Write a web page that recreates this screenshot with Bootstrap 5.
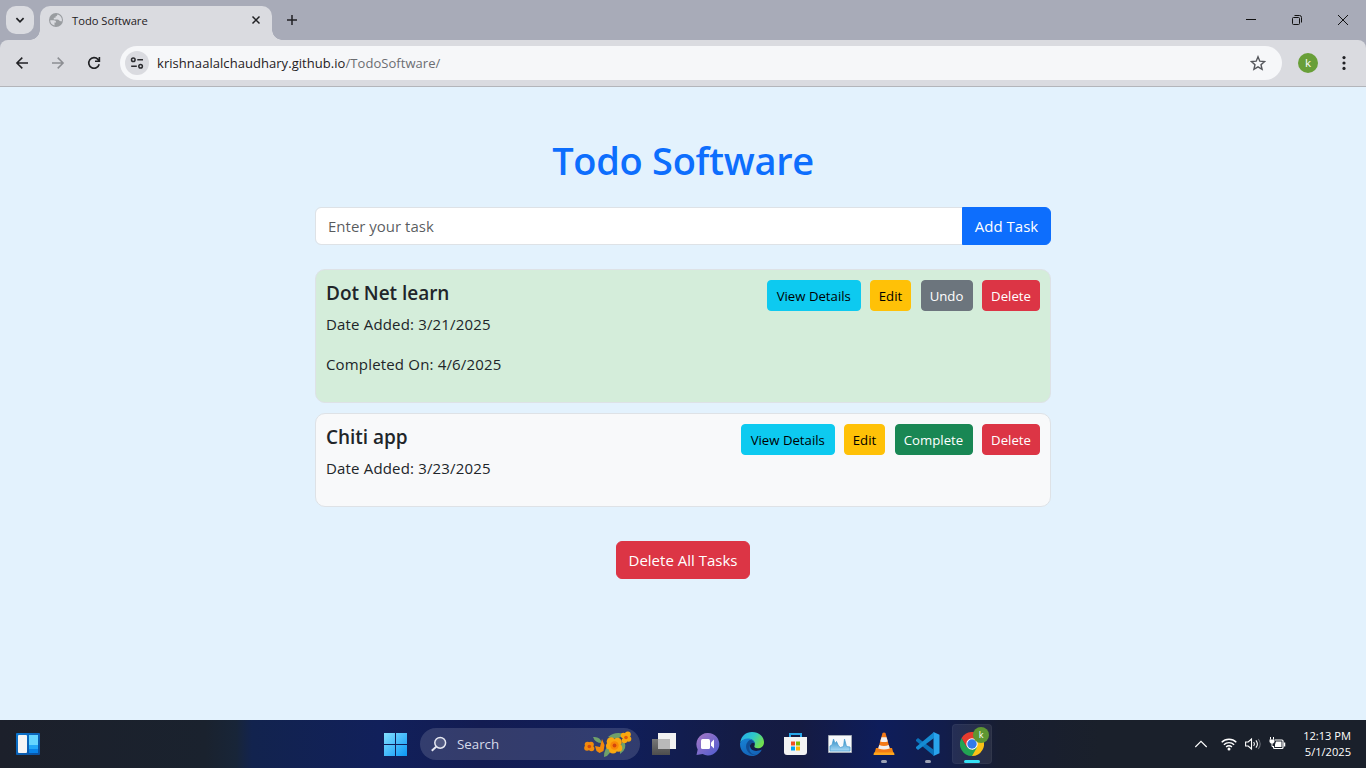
<!DOCTYPE html>
<html lang="en">
<head>
<meta charset="utf-8">
<meta name="viewport" content="width=device-width, initial-scale=1">
<title>Todo Software</title>
<link rel="stylesheet" href="https://cdn.jsdelivr.net/npm/bootstrap@5.3.0/dist/css/bootstrap.min.css">
<style>
  body { font-family: "Open Sans", "Noto Sans", sans-serif; font-size: 15px; line-height: 24px; background: #e3f2fd; overflow: hidden; }
  svg { display: block; flex: none; }
  /* browser window */
  .tab-strip { height: 40px; background: #a8abb8; padding-left: 6px; }
  .tab-menu { width: 28px; height: 28px; border-radius: 10px; background: #dadbe0; margin: 6px 6px 0 0; }
  .page-tab { width: 232px; height: 34px; margin-top: 6px; border-radius: 10px 10px 0 0; background: #dadbe0; font-size: 11.2px; line-height: 28px; padding: 0 8px 6px; color: #1f2023; }
  .page-tab::before, .page-tab::after { content: ""; position: absolute; bottom: 0; width: 10px; height: 10px; }
  .page-tab::before { left: -10px; background: radial-gradient(circle at 0 0, transparent 9.5px, #dadbe0 10px); }
  .page-tab::after { right: -10px; background: radial-gradient(circle at 100% 0, transparent 9.5px, #dadbe0 10px); }
  .tab-label { padding-top: 1px; }
  .win-btn { width: 46px; height: 40px; }
  .toolbar-wrap { background: #a8abb8; }
  .browser-bar { height: 47px; background: #dadbe0; border-radius: 8px 8px 0 0; border-bottom: 1px solid #b3b5ba; }
  .nav-ico { width: 36px; }
  .address { height: 34px; width: 1162px; margin-left: 8px; border-radius: 17px; background: #f6f7f9; padding: 0 16px 0 5px; font-size: 13px; letter-spacing: .05px; color: #1f2023; }
  .site-info { width: 24px; height: 24px; border-radius: 50%; background: #dadbe0; margin-right: 8px; }
  .url-path { color: #6b6d72; }
  .avatar-dot { width: 20px; height: 20px; border-radius: 50%; background: #689f38; color: #fff; font-size: 11.5px; line-height: 20px; margin: 0 16px; }
  /* todo page */
  .todo-page { height: 633px; }
  .todo-shell { width: 736px; padding-top: 50px; }
  .todo-title { font-size: 38px; line-height: 46px; font-weight: 550; margin-bottom: 24px; letter-spacing: -.3px; }
  .todo-shell .form-control, .todo-shell .btn { font-size: 15px; line-height: 24px; }
  .add-btn { width: 89px; padding-left: 0; padding-right: 0; white-space: nowrap; }
  .task-box { border: 1px solid #dee2e6; border-radius: 10px; padding: 10px; background: #f8f9fa; margin-bottom: 10px; }
  .task-box.done { background: #d4edda; }
  .task-box h5 { font-size: 19px; line-height: 22px; padding-top: 2px; font-weight: 600; margin-bottom: 8px; letter-spacing: -.03px; }
  .task-box p { letter-spacing: .17px; }
  .todo-shell .task-box .btn { font-size: 13.2px; line-height: 21px; height: 31px; padding: 5px 0 3px; white-space: nowrap; }
  .w-view { width: 93.5px; } .w-edit { width: 41px; } .w-undo { width: 52px; } .w-comp { width: 78px; } .w-del { width: 58px; }
  .task-actions { gap: 9.5px; }
  .clear-btn { width: 134px; margin-top: 24px; padding-left: 0; padding-right: 0; white-space: nowrap; }
  /* taskbar */
  .os-bar { height: 48px; padding-left: 16px; color: #fff; background: linear-gradient(90deg, #1c202b 0, #1a222e 205px, #182538 236px, #12234e 252px, #11205b 380px, #131c52 480px, #101e5a 620px, #141c45 740px, #151b42 800px, #0e1d5b 880px, #121d4b 945px, #181e31 1000px, #1a202b 1100px, #1a202b 100%); }
  .os-start { margin-left: 334px; }
  .os-slot { width: 44px; height: 48px; }
  .os-slot.running::after { content: ""; position: absolute; bottom: 5px; width: 6px; height: 3px; border-radius: 2px; background: #9ca2b5; }
  .os-slot.active { width: 40px; height: 40px; margin: 0 2px; border-radius: 4px; background: rgba(255,255,255,.08); border: 1px solid rgba(255,255,255,.04); }
  .os-slot.active::after { bottom: 0; width: 16px; background: #35e0f5; }
  .os-search { width: 220px; height: 32px; margin: 0 2px; border-radius: 16px; background: rgba(255,255,255,.14); font-size: 13.3px; color: #d6daea; padding: 0 6px 0 11px; }
  .search-label { margin-left: 10px; }
  .os-tray { margin-right: 15px; }
  .os-clock { font-size: 11.1px; line-height: 16px; margin-left: 17px; white-space: nowrap; }
  .mini-k { right: 2px; top: 2px; width: 16px; height: 16px; border-radius: 50%; background: #5e9732; font-size: 9px; line-height: 15px; }
</style>
<script src="https://cdn.jsdelivr.net/npm/bootstrap@5.3.0/dist/js/bootstrap.bundle.min.js"></script>
</head>
<body>
<header>
  <div class="tab-strip d-flex">
    <div class="tab-menu d-flex align-items-center justify-content-center">
      <svg width="12" height="12" fill="none" stroke="#202124" stroke-width="1.7"><path d="M2.4 4.200 6 7.800 9.600 4.200"/></svg>
    </div>
    <div class="page-tab d-flex align-items-center position-relative">
      <svg width="16" height="16" viewBox="0 0 16 16"><circle cx="8" cy="8" r="7" fill="#999ca0"/><path d="M2.200 8.200h3.400c1.800 0 2.500.8 2.500 2.200H6.500v3.100C4 13 2.100 10.700 2.200 8.200zM9.300 2.600c0 1.200-.5 1.800-1.800 1.800v1.400H5.800v1.700h3.600c1.500 0 1.700 1.700 3.400 1.700h1.100c.5-3.200-1.600-6-4.600-6.600z" fill="#dadbe0"/></svg>
      <span class="tab-label ms-2 flex-grow-1">Todo Software</span>
      <svg width="16" height="16" stroke="#202124" stroke-width="1.500"><path d="m4.500 4.500 7 7m0-7-7 7"/></svg>
    </div>
    <svg class="ms-2" width="24" height="40" stroke="#202124" stroke-width="1.500"><path d="M7 20h10M12 15v10"/></svg>
    <div class="d-flex ms-auto">
      <svg class="win-btn" fill="none" stroke="#111"><path d="M18 19.500h10"/></svg>
      <svg class="win-btn" fill="none" stroke="#111"><rect x="18.500" y="17.500" width="7" height="7" rx="1"/><path d="M20.500 15.500h5q2 0 2 2v5"/></svg>
      <svg class="win-btn" fill="none" stroke="#111"><path d="m18 15 10 10m0-10L18 25"/></svg>
    </div>
  </div>
  <div class="toolbar-wrap">
    <div class="browser-bar d-flex align-items-center ps-1">
      <svg class="nav-ico" height="16" viewBox="-10 0 36 16" fill="none" stroke="#202124" stroke-width="1.500"><path d="M14 8H3M8.300 2.600 2.900 8l5.400 5.400"/></svg>
      <svg class="nav-ico" height="16" viewBox="-10 0 36 16" fill="none" stroke="#8c8e93" stroke-width="1.500"><path d="M2 8h11M7.700 2.600 13.100 8l-5.400 5.400"/></svg>
      <svg class="nav-ico" height="16" viewBox="-10 0 36 16" fill="none" stroke="#202124" stroke-width="1.600"><path d="M13.200 9.300A5.300 5.300 0 1 1 12 4.400l1 1M13.400 2v4.300H9"/></svg>
      <div class="address d-flex align-items-center">
        <div class="site-info d-flex align-items-center justify-content-center">
          <svg width="14" height="14" fill="none" stroke="#2a2b2e" stroke-width="1.500"><circle cx="3.300" cy="3.800" r="1.800"/><path d="M7.300 3.800H13M1.200 10.200h5.600"/><circle cx="10.600" cy="10.200" r="1.800"/></svg>
        </div>
        <span class="flex-grow-1">krishnaalalchaudhary.github.io<span class="url-path">/TodoSoftware/</span></span>
        <svg width="16" height="16" fill="none" stroke="#55575c" stroke-width="1.400"><path d="m8 1.800 1.800 4.400 4.800.4L11 9.700l1.100 4.700L8 11.900l-4.100 2.500L5 9.700 1.400 6.600l4.800-.4z"/></svg>
      </div>
      <div class="avatar-dot text-center">k</div>
      <svg style="margin-left:6px" width="12" height="20" fill="#202124"><circle cx="4" cy="4.600" r="1.600"/><circle cx="4" cy="10" r="1.600"/><circle cx="4" cy="15.400" r="1.600"/></svg>
    </div>
  </div>
</header>

<main class="todo-page">
  <div class="todo-shell mx-auto">
    <h1 class="todo-title text-center text-primary">Todo Software</h1>
    <div class="input-group mb-4">
      <input type="text" class="form-control" placeholder="Enter your task">
      <button class="btn btn-primary add-btn" type="button">Add Task</button>
    </div>
    <section class="task-box done d-flex justify-content-between align-items-start">
      <div>
        <h5>Dot Net learn</h5>
        <p>Date Added: 3/21/2025</p>
        <p>Completed On: 4/6/2025</p>
      </div>
      <div class="task-actions d-flex">
        <button class="btn btn-info btn-sm w-view">View Details</button>
        <button class="btn btn-warning btn-sm w-edit">Edit</button>
        <button class="btn btn-secondary btn-sm w-undo">Undo</button>
        <button class="btn btn-danger btn-sm w-del">Delete</button>
      </div>
    </section>
    <section class="task-box d-flex justify-content-between align-items-start">
      <div>
        <h5>Chiti app</h5>
        <p>Date Added: 3/23/2025</p>
      </div>
      <div class="task-actions d-flex">
        <button class="btn btn-info btn-sm w-view">View Details</button>
        <button class="btn btn-warning btn-sm w-edit">Edit</button>
        <button class="btn btn-success btn-sm w-comp">Complete</button>
        <button class="btn btn-danger btn-sm w-del">Delete</button>
      </div>
    </section>
    <div class="text-center"><button class="btn btn-danger clear-btn">Delete All Tasks</button></div>
  </div>
</main>

<footer class="os-bar d-flex align-items-center">
  <svg width="24" height="24"><defs><linearGradient id="wf" x2="1" y2="1"><stop stop-color="#0a76d0"/><stop offset="1" stop-color="#0b4f9e"/></linearGradient></defs><rect y="1" width="24" height="22" rx="1" fill="url(#wf)"/><rect x="2" y="3" width="9" height="18" rx="1" fill="#f5f5f5"/><path d="M13 3h9v10h-9z" fill="#65d5ff"/><path d="M13 13h9v4h-9z" fill="#22a7f8"/><path d="M13 17h9v4h-9z" fill="#0883ea"/></svg>
  <div class="os-slot os-start d-flex align-items-center justify-content-center">
    <svg width="24" height="24"><defs><linearGradient id="st" gradientUnits="userSpaceOnUse" x1="0" y1="0" x2="24" y2="24"><stop stop-color="#85e0ff"/><stop offset="1" stop-color="#0896f5"/></linearGradient></defs><path d="M0 1h11v11H0zM12 1h11v11H12zM0 13h11v11H0zM12 13h11v11H12z" fill="url(#st)"/></svg>
  </div>
  <div class="os-search d-flex align-items-center">
    <svg width="16" height="16" fill="rgba(255,255,255,.15)" stroke="#e6e8f2" stroke-width="1.500"><circle cx="9.200" cy="6.800" r="5.400"/><path d="m5.200 10.700-4.400 4.100" stroke-width="1.900"/></svg>
    <span class="search-label flex-grow-1">Search</span>
    <!-- flower garland -->
    <svg width="50" height="28" viewBox="0 0 50 28">
      <g fill="#6fa06a"><path d="M9 7q7-1 9 6-7 0-9-6zM20 27q0-10 7-12 1 10-7 12zM36 24q-1-10 4-13 4 8-4 13zM24 7q7-6 16-3-5 7-16 3z"/></g>
      <g fill="#f28a0c"><circle cx="3.500" cy="14.500" r="2.800"/><circle cx="7" cy="14.500" r="2.800"/><circle cx="3" cy="18" r="2.800"/><circle cx="7.500" cy="18.500" r="2.800"/><path d="M11 16l5 1 2-8 2.500 6-1 6-4 2-3-2z"/></g>
      <g fill="#faa80f"><circle cx="27" cy="11.500" r="4.300"/><circle cx="33.500" cy="12" r="4.300"/><circle cx="34.500" cy="18" r="3.800"/><circle cx="29" cy="19.500" r="4"/><circle cx="25.500" cy="16" r="3.500"/><circle cx="39.500" cy="5.500" r="2.800"/><circle cx="44.500" cy="9" r="2.800"/><circle cx="40.500" cy="10.500" r="2.800"/><circle cx="43.800" cy="4.500" r="3"/></g>
      <circle cx="5.300" cy="16.500" r="1.800" fill="#d3470c"/><circle cx="30.500" cy="15.500" r="4.200" fill="#f98808"/><circle cx="30.500" cy="15.500" r="1.900" fill="#d3470c"/><circle cx="42" cy="7.500" r="1.800" fill="#e05a0c"/>
    </svg>
  </div>
  <div class="os-slot d-flex align-items-center justify-content-center"><svg width="24" height="24"><defs><linearGradient id="tv" x2="0" y2="1"><stop stop-color="#777"/><stop offset="1" stop-color="#4d4d4d"/></linearGradient></defs><path d="M6 1h18v16H6z" fill="#f2f2f2"/><path d="M0 7h18v16H0z" fill="url(#tv)"/><path d="M6 7h12v10H6z" fill="#b9b9b9"/></svg></div>
  <div class="os-slot d-flex align-items-center justify-content-center"><svg width="24" height="24"><defs><linearGradient id="ch" x2="1" y2="1"><stop stop-color="#a879c5"/><stop offset="1" stop-color="#4d5bd0"/></linearGradient></defs><path d="M11.700 1a11.200 11.200 0 1 1-5 21L.5 23l1.200-5.500A11.200 11.200 0 0 1 11.700 1z" fill="url(#ch)"/><rect x="5" y="7" width="9" height="10" rx="1.500" fill="#fff"/><path d="m15 10.500 3-3v9l-3-3z" fill="#fff"/></svg></div>
  <div class="os-slot d-flex align-items-center justify-content-center"><svg width="24" height="24"><defs><linearGradient id="e1" x2="1" y2=".5"><stop stop-color="#24a8ee"/><stop offset=".55" stop-color="#2fc8c9"/><stop offset="1" stop-color="#70df50"/></linearGradient><linearGradient id="e2" x2=".5" y2="1"><stop stop-color="#1783d5"/><stop offset="1" stop-color="#1464b8"/></linearGradient></defs><path d="M.2 10.500C1.200 4 6 0 12 0c7 0 12 4.700 12 10.200 0 4-3 6-6.300 6-2.500 0-4-1-3.200-2.500C16 10.500 13 7 9 7 4.500 7 2 8.500.2 10.500z" fill="url(#e1)"/><path d="M.1 11C2.500 4.800 14 5 15 11.500c-3-2.500-5.300 0-5 3 .5 4 5.500 6 11.800 3C20 21.500 16.500 24 12 24 5 24-.6 18.500.1 11z" fill="url(#e2)"/><path d="M9 8.500C6 11 5 15 7.500 19c2 3.500 6 4.500 9.200 4-5.200 0-8.700-4-6.700-9.500.6-1.700 2.500-3.200 4.500-2.500C13.500 8.500 11 7.500 9 8.500z" fill="#104d95"/></svg></div>
  <div class="os-slot d-flex align-items-center justify-content-center"><svg width="24" height="24"><path d="M6 6V2h11v4" fill="none" stroke="#28a7ea" stroke-width="2"/><path d="M0 5h23v15q0 3-3 3H3q-3 0-3-3z" fill="#f3f3f3"/><path d="M7 9.500h4v4H7z" fill="#f25022"/><path d="M12 9.500h4v4h-4z" fill="#7fba00"/><path d="M7 14.500h4v4H7z" fill="#00a4ef"/><path d="M12 14.500h4v4h-4z" fill="#ffb900"/></svg></div>
  <div class="os-slot d-flex align-items-center justify-content-center"><svg width="24" height="24"><defs><linearGradient id="gr" x2="0" y2="1"><stop stop-color="#2b8ac4"/><stop offset="1" stop-color="#a9daf6"/></linearGradient></defs><path d="M.5 3.500h23v17H.5z" fill="#f7f9fb" stroke="#a4abb5"/><path d="M2 19v-5l2-1 1.500-6L7 11.500l1.500-2 2 4.500 2 1.500 3-1L16.500 7l2 7.500 3.500.5v4z" fill="url(#gr)" stroke="#4d9fd0" stroke-width=".8"/></svg></div>
  <div class="os-slot running position-relative d-flex align-items-center justify-content-center"><svg width="24" height="24"><path d="M4 16h16l2 7H2z" fill="#f18413"/><path d="M10.500 1q1.500-1 3 0l5 18q-6.500 3-13 0z" fill="#f47a16"/><path d="m9.500 5.200 5 0 1.300 4.300q-3.800 1-7.600 0zM7.200 13q4.800 2 9.600 0l1 3.500q-5.800 2-11.600 0z" fill="#f2f0ed"/><path d="M2 20.500h20l.5 2.500h-21z" fill="#ffa51c"/></svg></div>
  <div class="os-slot running position-relative d-flex align-items-center justify-content-center"><svg width="24" height="24"><path d="m17.500 0 6 2.800v18.400l-6 2.800z" fill="#29a3ec"/><path d="m0 7.800 2-1.900 16 12V24L0 9z" fill="#0a72bb"/><path d="m0 16.200 2 1.900L18 6V0L0 15z" fill="#158bd3"/></svg></div>
  <div class="os-slot running active position-relative d-flex align-items-center justify-content-center">
    <svg width="24" height="24"><path d="M12 12 1.600 6A12 12 0 0 1 22.400 6z" fill="#e63b2e"/><path d="M12 12 22.400 6A12 12 0 0 1 12 24z" fill="#fbc116"/><path d="M12 24A12 12 0 0 1 1.600 6l5.200 9L12 18l5.200-3z" fill="#22a453"/><path d="M12 6.500h10.600L22.400 6 1.600 6l5.200 9z" fill="#e63b2e"/><circle cx="12" cy="12" r="5.700" fill="#fff"/><circle cx="12" cy="12" r="4.700" fill="#3079ea"/></svg>
    <span class="mini-k position-absolute text-center">k</span>
  </div>
  <div class="os-tray d-flex align-items-center ms-auto">
    <svg width="14" height="12" fill="none" stroke="#fff" stroke-width="1.100"><path d="m1.300 9 5.700-5.700L12.700 9"/></svg>
    <svg style="margin-left:13px" width="16" height="16" fill="none" stroke="#fff" stroke-width="1.400"><path d="M.7 6.300a10.400 10.400 0 0 1 14.600 0M2.900 8.700a7.200 7.200 0 0 1 10.200 0M5.100 11a4.100 4.100 0 0 1 5.800 0"/><circle cx="8" cy="13" r="1.500" fill="#fff" stroke="none"/></svg>
    <svg class="ms-2" width="17" height="16" fill="none" stroke="#fff" stroke-width="1.100"><path d="M.6 6v4h2.600l3.300 3V3L3.200 6zM8.700 6q1.500 2 0 4M10.900 4.300q3 3.700 0 7.400"/><path d="M13.200 3q4 5 0 10" stroke="#686c75"/></svg>
    <svg style="margin-left:7px" width="17" height="16" fill="none" stroke="#fff"><path d="M6 4h7q1 0 1 1v6.500q0 1-1 1H5.500q-1 0-1-1V10" stroke-width="1.200"/><path d="M1.500 1v2.500M4.500 1v2.500M3 7v3.500h1.500"/><path d="M.5 3.500h5V6L4.200 7.500H1.800L.5 6zM7 5.500h5.500V11H6V8.500z" fill="#fff" stroke="none"/><path d="M15.500 6.500v4" stroke-width="1.500"/></svg>
    <div class="os-clock text-end"><div>12:13 PM</div><div>5/1/2025</div></div>
  </div>
</footer>
</body>
</html>
